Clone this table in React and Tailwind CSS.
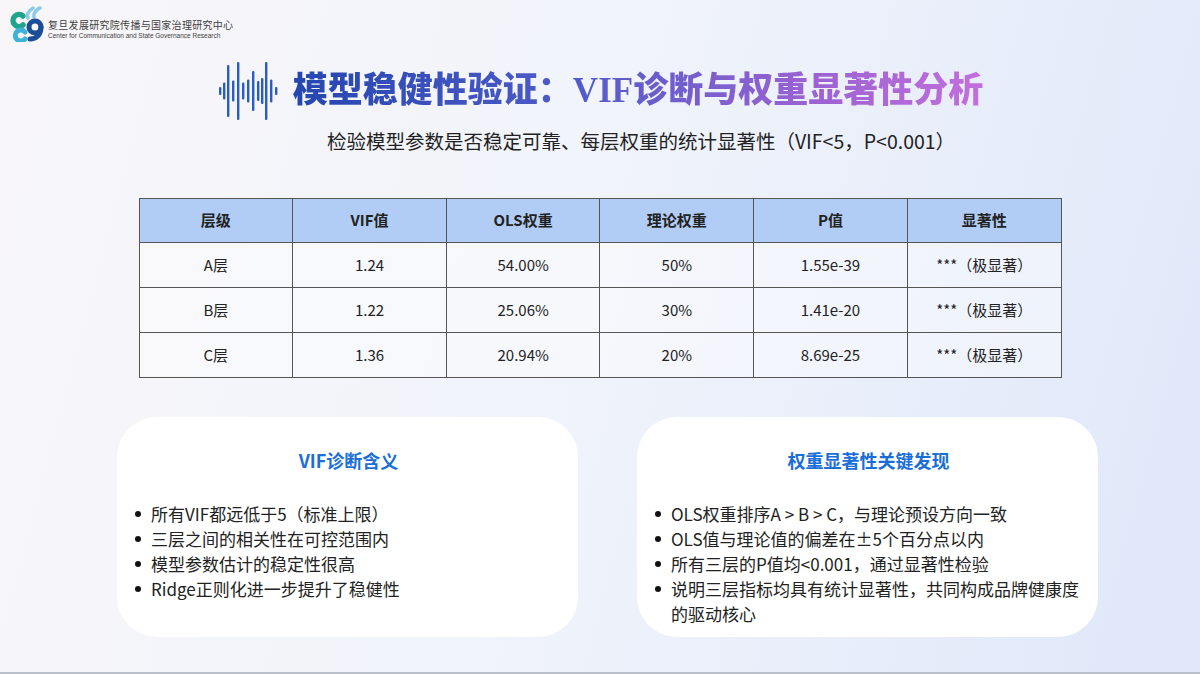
import React from 'react';

const rows = [
  ['A层', '1.24', '54.00%', '50%', '1.55e-39', '***（极显著）'],
  ['B层', '1.22', '25.06%', '30%', '1.41e-20', '***（极显著）'],
  ['C层', '1.36', '20.94%', '20%', '8.69e-25', '***（极显著）'],
];

const heads = ['层级', 'VIF值', 'OLS权重', '理论权重', 'P值', '显著性'];

// bars of the wave icon: x, height
const bars = [
  [2, 8], [6, 17], [10, 52], [15, 21], [20, 58], [25, 17], [30, 23],
  [35, 40], [40, 20], [44, 26], [48, 58], [53, 23], [58, 8],
];

function Logo() {
  return (
    <svg width="38" height="38" viewBox="0 0 38 38">
      <path d="M17 12 A6 6 0 1 0 17 21" fill="none" stroke="#1ea58b" strokeWidth="5.5" strokeLinecap="round" />
      <path d="M22 14 C20 10 24 6 27 4" fill="none" stroke="#8ccbe8" strokeWidth="3.5" strokeLinecap="round" />
      <path d="M28 13 C27 9 31 5 34 4" fill="none" stroke="#8ccbe8" strokeWidth="3.5" strokeLinecap="round" />
      <circle cx="29" cy="23" r="6" fill="none" stroke="#1c4d97" strokeWidth="5" />
      <path d="M35 23 C35 31 30 35 24 35" fill="none" stroke="#1c4d97" strokeWidth="5" strokeLinecap="round" />
      <path d="M19 28 A5.5 5.5 0 1 0 19 35" fill="none" stroke="#3fb2d9" strokeWidth="5" strokeLinecap="round" />
    </svg>
  );
}

function Wave() {
  return (
    <svg width="62" height="60" viewBox="0 0 62 60">
      {bars.map(([x, h], i) => (
        <rect key={i} x={x} y={30 - h / 2} width="2.4" height={h} rx="1" fill="#2a5cc6" />
      ))}
    </svg>
  );
}

function Card({ title, items }) {
  return (
    <div className="w-[461px] h-[220px] bg-white rounded-[40px] pt-[30px] pl-[18px] pr-[16px]">
      <div className="text-center text-[18px] leading-[26px] font-bold text-[#1a6ed8]">{title}</div>
      <ul className="mt-[28px]">
        {items.map((t, i) => (
          <li key={i} className="flex text-[17px] leading-[25px] text-[#222]">
            <span className="w-[16px] shrink-0 flex items-start pt-[10px]">
              <span className="w-[6px] h-[6px] rounded-full bg-[#111]" />
            </span>
            <span>{t}</span>
          </li>
        ))}
      </ul>
    </div>
  );
}

export default function App() {
  return (
    <div
      className="w-[1200px] h-[674px] overflow-hidden border-b-2 border-[#b9c0cb] bg-[linear-gradient(105deg,#f8f6f9_0%,#f1f4fb_45%,#dfe7f9_100%)]"
      style={{ fontFamily: '"Noto Sans CJK SC", "Noto Sans", sans-serif' }}
    >
      <div className="flex items-center gap-[4px] pl-[6px] pt-[3px] h-[43px]">
        <Logo />
        <div className="flex flex-col pt-[12px]">
          <span className="text-[10px] leading-[12px] text-[#3d3d3d] tracking-[0.3px]">复旦发展研究院传播与国家治理研究中心</span>
          <span className="text-[6.5px] leading-[9px] text-[#3d3d3d]" style={{ fontFamily: '"Liberation Sans", sans-serif' }}>
            Center for Communication and State Governance Research
          </span>
        </div>
      </div>

      <div className="flex justify-center items-center gap-[14px] mt-[20px] h-[56px]">
        <Wave />
        <h1
          className="text-[35px] leading-[48px] font-black bg-[linear-gradient(90deg,#2546b0_0%,#4f5bc8_40%,#9b62d2_75%,#c26fdc_100%)] bg-clip-text text-transparent"
          style={{ fontFamily: '"Liberation Serif", "Noto Sans CJK SC", serif' }}
        >
          模型稳健性验证：VIF诊断与权重显著性分析
        </h1>
      </div>

      <div className="flex justify-center pl-[82px] mt-[9px] text-[19.5px] leading-[26px] text-[#222]">
        检验模型参数是否稳定可靠、每层权重的统计显著性（VIF&lt;5，P&lt;0.001）
      </div>

      <table className="mx-auto mt-[44px] w-[923px] table-fixed border-collapse text-[15px] text-[#222]">
        <thead>
          <tr className="bg-[#b1cdf6] h-[44px]">
            {heads.map((h) => (
              <th key={h} className="border border-[#555] font-bold">{h}</th>
            ))}
          </tr>
        </thead>
        <tbody>
          {rows.map((r, i) => (
            <tr key={i} className="h-[45px] bg-white/40">
              {r.map((c, j) => (
                <td key={j} className="border border-[#555] text-center">{c}</td>
              ))}
            </tr>
          ))}
        </tbody>
      </table>

      <div className="flex gap-[59px] pl-[117px] mt-[39px]">
        <Card
          title="VIF诊断含义"
          items={['所有VIF都远低于5（标准上限）', '三层之间的相关性在可控范围内', '模型参数估计的稳定性很高', 'Ridge正则化进一步提升了稳健性']}
        />
        <Card
          title="权重显著性关键发现"
          items={[
            'OLS权重排序A > B > C，与理论预设方向一致',
            'OLS值与理论值的偏差在±5个百分点以内',
            '所有三层的P值均<0.001，通过显著性检验',
            '说明三层指标均具有统计显著性，共同构成品牌健康度的驱动核心',
          ]}
        />
      </div>
    </div>
  );
}
